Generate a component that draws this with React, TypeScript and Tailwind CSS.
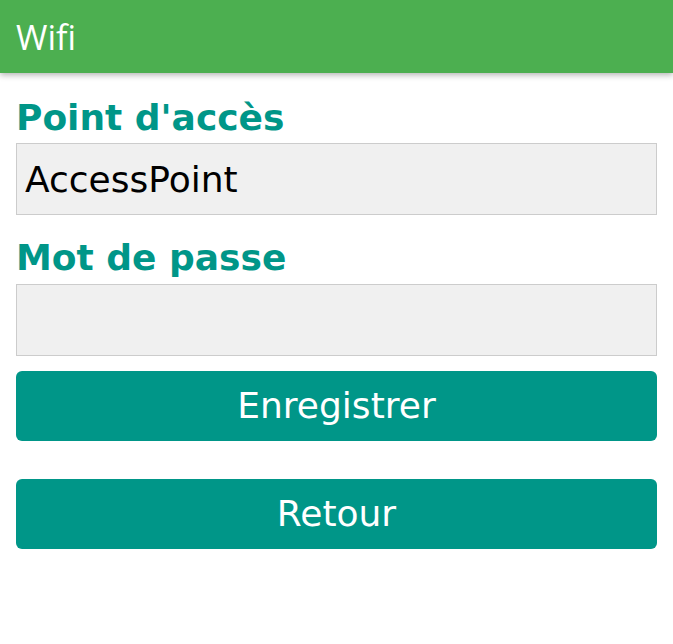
export default function App() {
  return (
    <div className="min-h-screen bg-white">
      {/* Top bar */}
      <header className="h-[73px] bg-[#4caf50] shadow-[0_2px_6px_rgba(0,0,0,0.3)] flex items-center px-4">
        <h1 className="text-white text-[34px] font-normal font-['Open_Sans',sans-serif] leading-none">
          Wifi
        </h1>
      </header>

      {/* Form */}
      <main className="px-4 pt-6 font-['DejaVu_Sans',sans-serif]">
        <label
          htmlFor="ssid"
          className="block text-[36px] leading-[42px] font-bold text-[#009688]"
        >
          Point d'accès
        </label>
        <input
          id="ssid"
          type="text"
          defaultValue="AccessPoint"
          className="mt-1 block w-full h-[72px] px-2 bg-[#f0f0f0] border border-[#cccccc] text-[36px] text-black outline-none"
        />

        <label
          htmlFor="pass"
          className="block mt-[22px] text-[36px] leading-[42px] font-bold text-[#009688]"
        >
          Mot de passe
        </label>
        <input
          id="pass"
          type="password"
          className="mt-[5px] block w-full h-[72px] px-2 bg-[#f0f0f0] border border-[#cccccc] text-[36px] text-black outline-none"
        />

        <button className="mt-[15px] w-full h-[70px] rounded-md bg-[#009688] text-white text-[36px] flex items-center justify-center">
          Enregistrer
        </button>
        <button className="mt-[38px] w-full h-[70px] rounded-md bg-[#009688] text-white text-[36px] flex items-center justify-center">
          Retour
        </button>
      </main>
    </div>
  );
}
